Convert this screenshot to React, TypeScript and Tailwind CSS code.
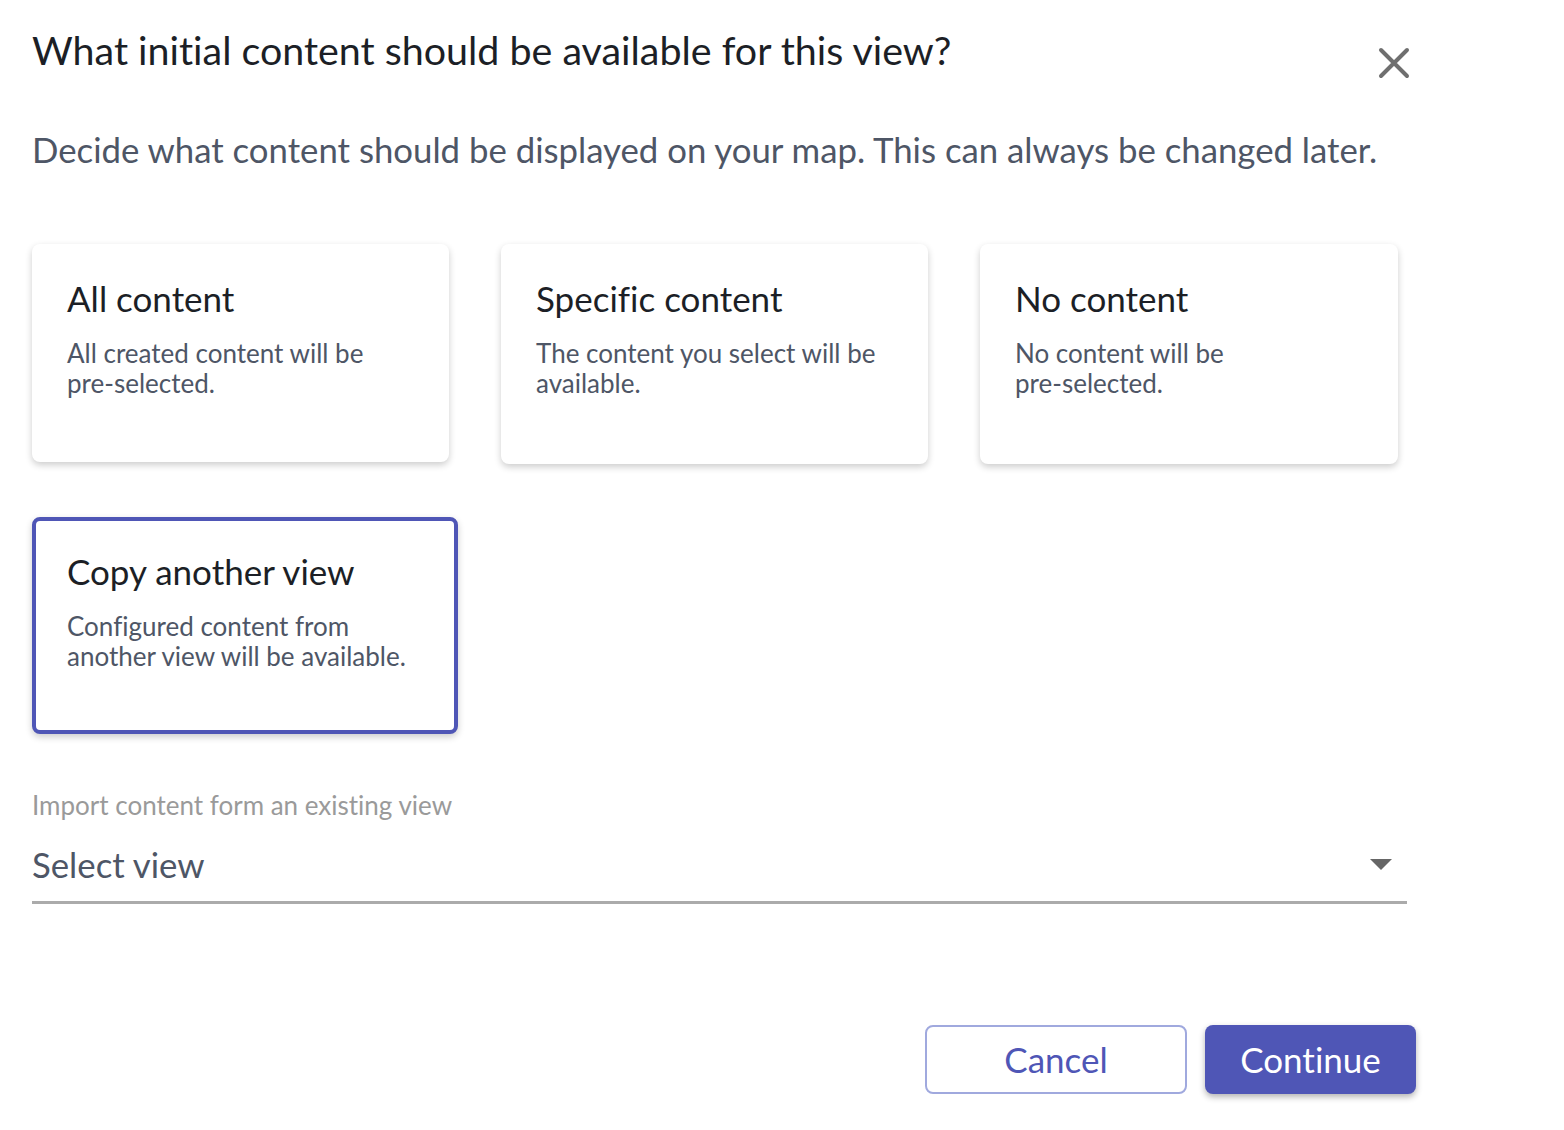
import React from "react";

interface OptionCardProps {
  title: string;
  lines: string[];
  className: string;
}

const OptionCard: React.FC<OptionCardProps> = ({ title, lines, className }) => (
  <div className={`rounded-[8px] bg-white shadow-[0_3px_7px_rgba(0,0,0,0.2)] ${className}`}>
    <h2 className="text-[35px] leading-[44px] text-[#1c1f26]">{title}</h2>
    <p className="mt-[18px] text-[26px] leading-[30px] text-[#4e5666]">
      {lines.map((line) => (
        <span key={line} className="block">
          {line}
        </span>
      ))}
    </p>
  </div>
);

export default function App() {
  return (
    <div className="w-[1564px] h-[1130px] bg-white pl-[32px] pt-[26px] font-['Lato','Noto_Sans',sans-serif] [font-variant-ligatures:none] overflow-hidden">
      <div className="flex w-[1384px] items-start justify-between">
        <h1 className="text-[39.4px] leading-[48px] text-[#1c1f26]">
          What initial content should be available for this view?
        </h1>
        <button className="mt-[21px] mr-[6px] text-[#6f6f6f]" aria-label="Close">
          <svg width="32" height="32" viewBox="0 0 32 32" fill="none" stroke="currentColor" strokeWidth="4" strokeLinecap="round">
            <path d="M3 3 L29 29 M29 3 L3 29" />
          </svg>
        </button>
      </div>

      <p className="mt-[46px] text-[34.75px] leading-[50px] text-[#4e5666]">
        Decide what content should be displayed on your map. This can always be changed later.
      </p>

      <div className="mt-[69px] flex gap-[52px]">
        <OptionCard
          title="All content"
          lines={["All created content will be", "pre-selected."]}
          className="w-[417px] h-[218px] pl-[35px] pt-[32px]"
        />
        <OptionCard
          title="Specific content"
          lines={["The content you select will be", "available."]}
          className="w-[427px] h-[220px] pl-[35px] pt-[32px]"
        />
        <OptionCard
          title="No content"
          lines={["No content will be", "pre-selected."]}
          className="w-[418px] h-[220px] pl-[35px] pt-[32px]"
        />
      </div>

      <OptionCard
        title="Copy another view"
        lines={["Configured content from", "another view will be available."]}
        className="mt-[53px] w-[426px] h-[217px] pl-[31px] pt-[28px] border-[4px] border-[#4f56b6]"
      />

      <div className="mt-[55px] w-[1375px]">
        <div className="text-[26px] leading-[32px] text-[#9a9a9a]">Import content form an existing view</div>
        <div className="mt-[19px] flex h-[64px] items-start justify-between border-b-[3px] border-[#ababab]">
          <span className="text-[34.75px] leading-[50px] text-[#4e5666]">Select view</span>
          <span className="mt-[19px] mr-[15px] h-0 w-0 border-x-[11px] border-t-[11px] border-x-transparent border-t-[#666666]" />
        </div>
      </div>

      <div className="mt-[121px] flex w-[1384px] justify-end gap-[18px]">
        <button className="h-[69px] w-[262px] rounded-[8px] border-[2px] border-[#a0a9de] bg-white text-[35px] text-[#4f56b6]">
          Cancel
        </button>
        <button className="h-[69px] w-[211px] rounded-[8px] bg-[#4f56b6] text-[35px] text-white shadow-[0_3px_6px_rgba(0,0,0,0.3)]">
          Continue
        </button>
      </div>
    </div>
  );
}
